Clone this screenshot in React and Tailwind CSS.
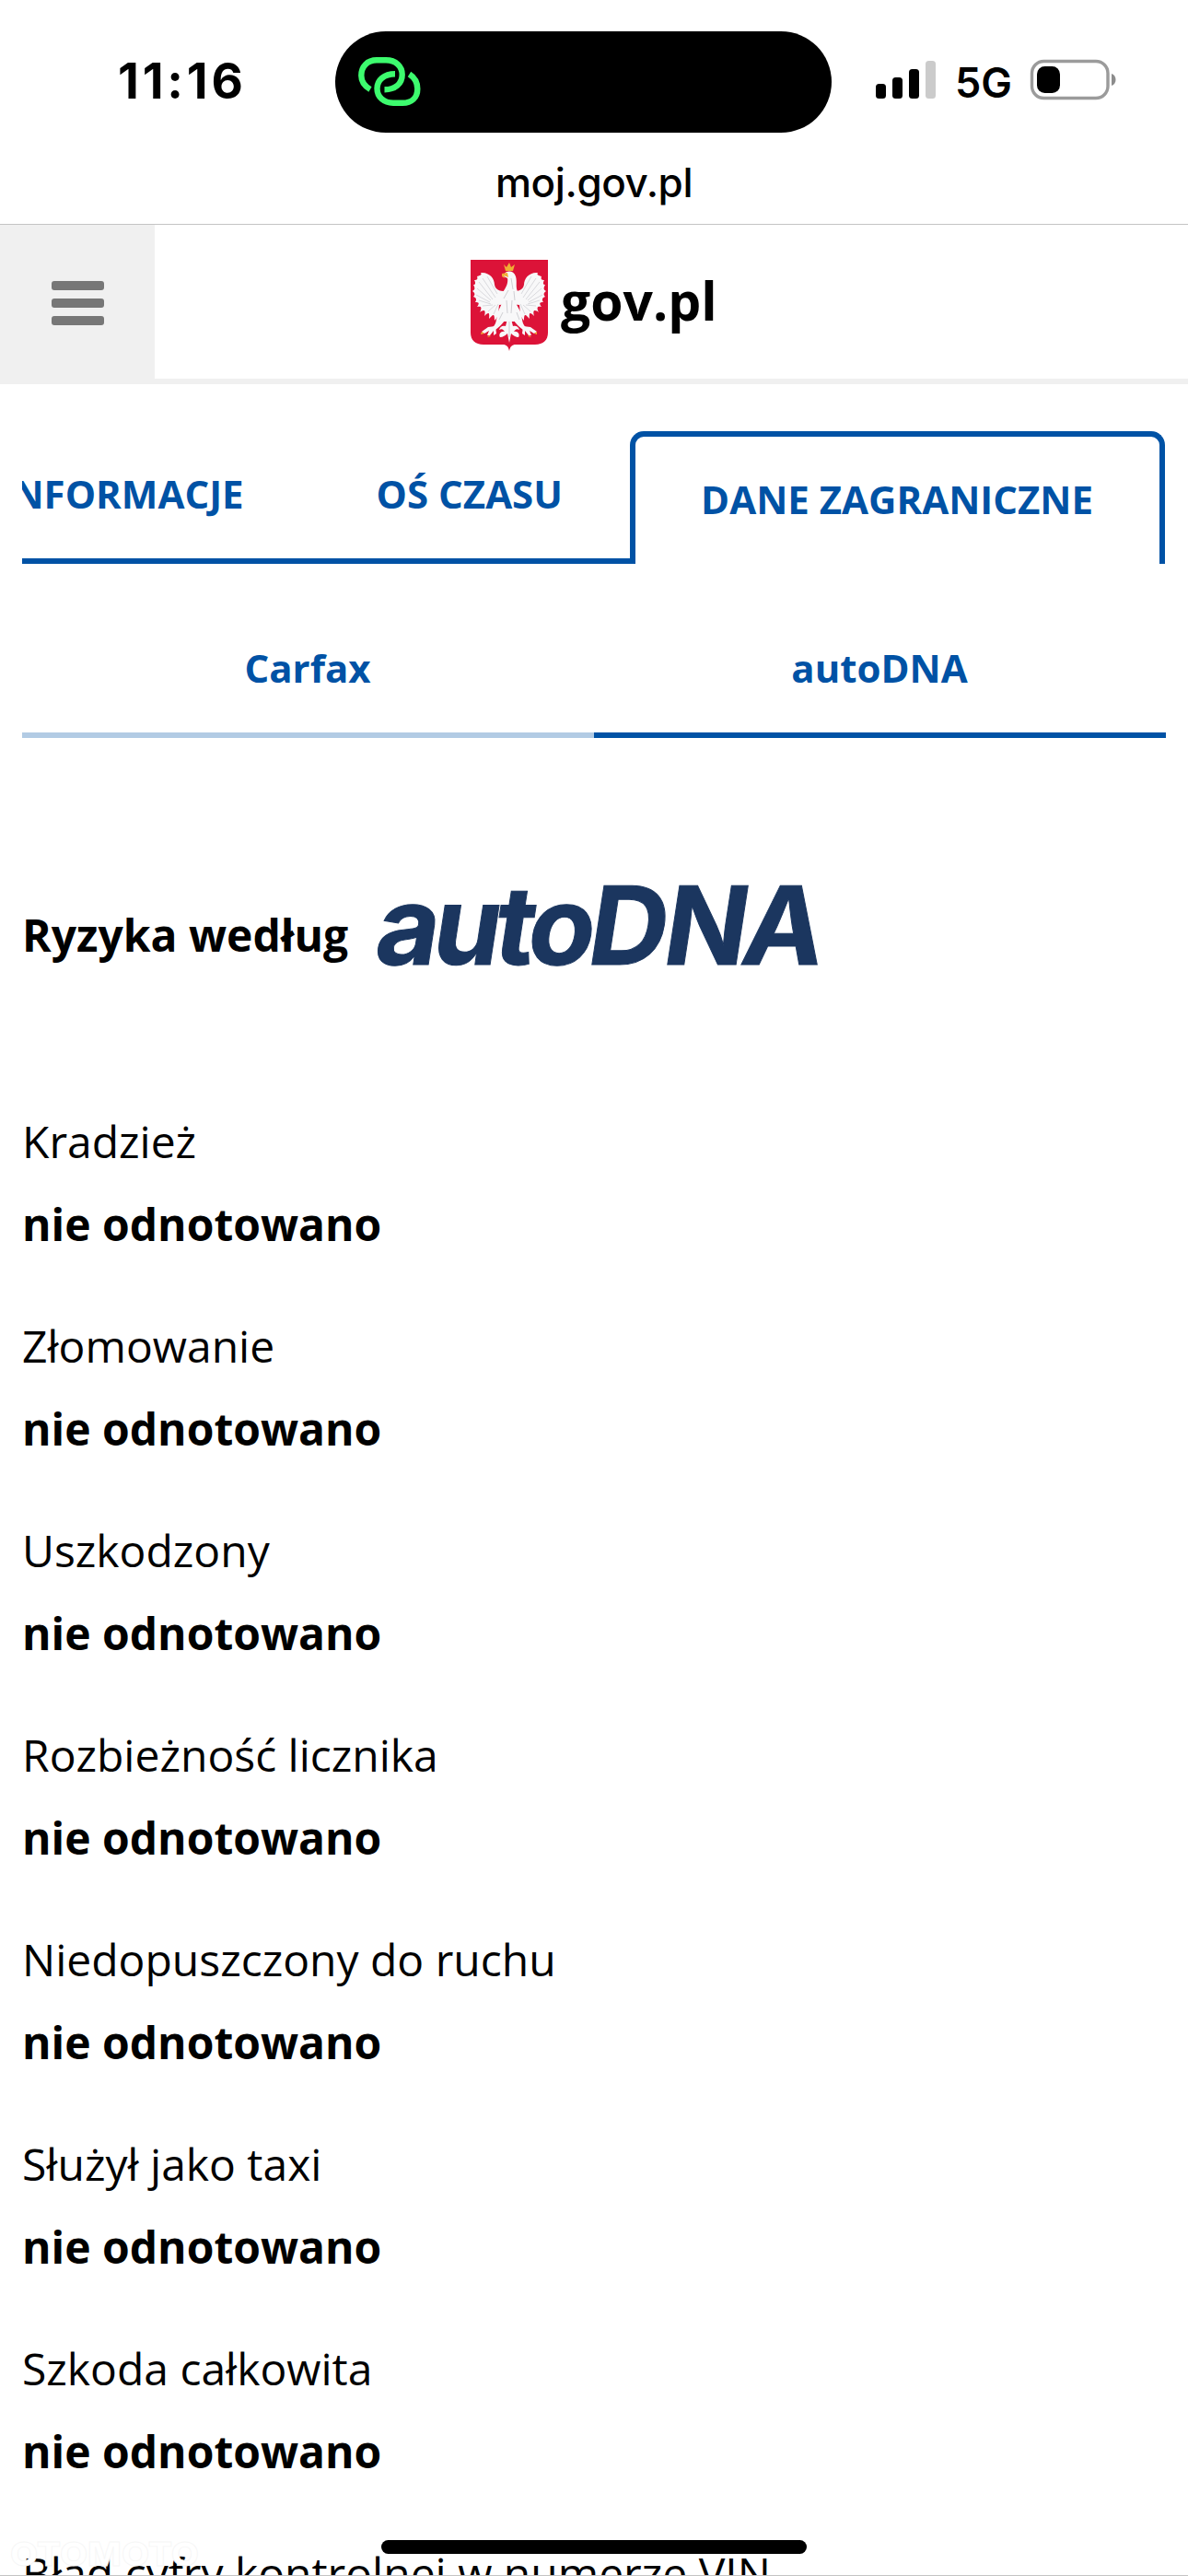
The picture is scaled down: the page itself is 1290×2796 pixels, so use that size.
import React from "react";

const risks = [
  "Kradzież",
  "Złomowanie",
  "Uszkodzony",
  "Rozbieżność licznika",
  "Niedopuszczony do ruchu",
  "Służył jako taxi",
  "Szkoda całkowita",
];

function LinkIcon() {
  return (
    <svg
      viewBox="0 0 68 54"
      className="absolute left-[25px] top-[28px] w-[68px] h-[54px]"
      fill="none"
      stroke="#3dfb6e"
      strokeWidth="6.4"
      aria-hidden="true"
    >
      <path d="M13 35C7 31.500 3.300 26.500 3.300 20C3.300 10 10 3.300 20 3.300H30C41 3.300 47.700 10 47.700 19C47.700 29 40 35.300 28.500 35.300" />
      <path d="M40 18.300C28 18.300 20.500 25 20.500 34C20.500 43.500 28 49.800 38 49.800H48C58 49.800 64.300 44 64.300 34.500C64.300 27 61 22 55.500 18.500" />
    </svg>
  );
}

function StatusBar() {
  return (
    <div className="relative h-[156px] font-['Inter',sans-serif]">
      <div className="absolute left-[128px] top-[56px] text-[53px] leading-[64px] font-bold tracking-[3.8px]">
        11:16
      </div>
      <div className="absolute left-[364px] top-[34px] w-[539px] h-[110px] rounded-full bg-black">
        <LinkIcon />
      </div>
      <svg
        viewBox="0 0 270 60"
        className="absolute left-[945px] top-[60px] w-[270px] h-[60px]"
        aria-hidden="true"
      >
        <rect x="6" y="31" width="11" height="16" rx="3.500" />
        <rect x="24" y="24" width="11" height="23" rx="3.500" />
        <rect x="42" y="15" width="11" height="32" rx="3.500" />
        <rect x="60" y="6" width="11" height="41" rx="3.500" fill="#cbcbcb" />
        <rect x="175.500" y="6.500" width="82.500" height="40" rx="13" fill="none" stroke="#9b9b9b" strokeWidth="3.400" />
        <path d="M262 20C268 22 268 31 262 33Z" fill="#8c8c8c" />
        <rect x="181" y="12" width="25" height="29" rx="8.500" />
      </svg>
      <div className="absolute left-[1037px] top-[63px] text-[45px] leading-[54px] font-semibold">
        5G
      </div>
    </div>
  );
}

function Emblem() {
  const wing = (
    <g>
      <path d="M40 34C34 34 27 34 26 27C26 20 20 13 11 14C13 17 9 17 7 18C8 21 7 22 4 22C6 26 5 27 3 27C5 31 5 32 2 34C5 36 5 38 3 40C6 41 7 43 5 46C9 46 10 47 7 51C11 50 13 51 10 57C14 54 17 54 15 61C19 57 21 56 20 64C24 60 26 57 26 66C31 61 30 56 31 49L40 48Z" />
      <path
        d="M13 20L27 41M9 24L24 43M7 31L22 44M6 38L21 46M9 44L22 48M13 50L24 49M19 56L27 49M25 59L30 48M18 18L29 37"
        stroke="#d0d0d5"
        strokeWidth="0.800"
        fill="none"
      />
    </g>
  );
  return (
    <svg viewBox="0 0 84 99" className="w-[84px] h-[99px] shrink-0" aria-hidden="true">
      <path d="M0 0H84V79C84 87 79 92 70 92H49C45 92 43 94 42 99C41 94 39 92 35 92H14C5 92 0 87 0 79Z" fill="#dc1338" />
      <g fill="#f8f8f9">
        {wing}
        <g transform="translate(84 0) scale(-1 1)">{wing}</g>
        <path d="M37 15C40 11 47 12 49 18C51 25 48 30 52 36C55 40 54 45 50 47L48 67H36L34 47C29 44 30 39 35 35C39 30 41 24 40 20L36 18Z" />
        <path d="M35 45L29 58C28 67 27 71 24 73L27 76C34 71 39 65 41 55ZM48 45L55 58C56 67 57 71 60 73L57 76C50 71 45 65 43 55Z" />
        <path d="M27 72L19 73L12 78L15 80L20 77L18 82L21 82L25 77L25 82L28 80ZM57 72L65 73L72 78L69 80L64 77L66 82L63 82L59 77L59 82L56 80Z" />
        <path d="M40 64H44L46 72C50 71 52 73 53 76C50 74 48 76 47 78C51 77 54 81 52 84C49 84 46 82 44 80L42 90L40 80C38 82 35 84 32 84C30 81 33 77 37 78C36 76 34 74 31 76C32 73 34 71 38 72Z" />
      </g>
      <g stroke="#c9c9ce" strokeWidth="0.900" fill="none">
        <path d="M44 20L46 32M41 33L36 42M47 34L48 44M39 44L40 58M45 44L44 58M35 57L31 65M50 57L53 65M42 67V84" />
      </g>
      <path d="M36 5L39 8L42 3L44 8L48 5L46 12H38ZM34 15L40 14L41 19L36 17L37 20L34 18ZM12 78L11 81L15 80ZM20 82L18 84L22 83ZM72 78L72 81L69 80ZM64 82L66 84L62 83Z" fill="#f0ad35" />
    </svg>
  );
}

function Header() {
  return (
    <header className="flex h-[173px]">
      <button type="button" className="w-[168px] bg-[#f0f0f0] flex flex-col items-center gap-[9px] pt-[61px]">
        <span className="w-[57px] h-[10px] rounded-[3px] bg-[#777]" />
        <span className="w-[57px] h-[10px] rounded-[3px] bg-[#777]" />
        <span className="w-[57px] h-[10px] rounded-[3px] bg-[#777]" />
      </button>
      <div className="flex flex-1 pl-[343px] pt-[38px] border-b-[6px] border-[#f0f0f0]">
        <Emblem />
        <span className="ml-[14px] mt-[5px] text-[57px] leading-[78px] font-bold">gov.pl</span>
      </div>
    </header>
  );
}

function Tabs() {
  return (
    <nav className="text-[#0052a5] font-bold text-[42px]">
      <div className="flex h-[144px] overflow-hidden">
        <div className="w-[660px] flex justify-end overflow-hidden border-b-[6px] border-[#0052a5] leading-[60px] pt-[38px] whitespace-nowrap">
          <span className="mr-[144px]">INFORMACJE</span>
          <span className="mr-[73px]">OŚ CZASU</span>
        </div>
        <div className="w-[581px] border-[#0052a5] border-t-[6px] border-x-[6px] rounded-t-[15px] text-center leading-[60px] pt-[38px]">
          <span className="mr-px">DANE ZAGRANICZNE</span>
        </div>
      </div>
      <div className="flex mt-[42px] h-[147px] text-center leading-[60px]">
        <div className="flex-1 pt-[41px] pr-px border-b-[6px] border-[#b2cbe4]">Carfax</div>
        <div className="flex-1 pt-[41px] pr-px border-b-[6px] border-[#0052a5]">autoDNA</div>
      </div>
    </nav>
  );
}

function AutoDnaLogo() {
  return (
    <svg
      viewBox="0 0 490 140"
      className="ml-[30px] -mt-[10px] w-[490px] h-[140px] overflow-visible"
      aria-label="autoDNA"
    >
      {/* letters are set tightly, one x per letter */}
      <text
        x="-4 58 125 161 227 309 394"
        y="0"
        transform="translate(0 116) skewX(-8.7)"
        fill="#1b365f"
        stroke="#1b365f"
        strokeWidth="1"
        fontFamily="Inter, sans-serif"
        fontWeight="700"
        fontSize="118"
      >
        autoDNA
      </text>
    </svg>
  );
}

export default function App() {
  return (
    <div className="relative w-[1290px] h-[2796px] overflow-hidden bg-white text-black font-['Open_Sans',sans-serif]">
      <StatusBar />
      <div className="h-[88px] border-b border-[#c4c4c4] pt-[17px] text-center font-['Inter',sans-serif] font-medium text-[44px] leading-[50px] tracking-[-0.4px]">
        moj.gov.pl
      </div>
      <Header />
      <main className="px-6 pt-[51px]">
        <Tabs />
        <div className="flex mt-[140px] h-[120px]">
          <h2 className="text-[48px] leading-[72px] font-bold pt-[38px] whitespace-nowrap">Ryzyka według</h2>
          <AutoDnaLogo />
        </div>
        <dl className="mt-[133px] text-[48px]">
          {risks.map((name) => (
            <div key={name} className="h-[222px]">
              <dt className="leading-[90px]">{name}</dt>
              <dd className="leading-[90px] font-bold">nie odnotowano</dd>
            </div>
          ))}
          <dt className="leading-[90px] whitespace-nowrap">Błąd cyfry kontrolnej w numerze VIN</dt>
        </dl>
      </main>

      {/* Watermark, white on white apart from its thin edge */}
      <svg viewBox="0 0 220 40" className="absolute left-0 top-[2754px] w-[220px] h-[40px]" aria-hidden="true">
        <text
          x="11"
          y="31"
          textLength="205"
          lengthAdjust="spacingAndGlyphs"
          fill="#fff"
          stroke="#f6f6f6"
          strokeWidth="0.8"
          fontFamily="Inter, sans-serif"
          fontWeight="800"
          fontSize="35"
        >
          OTOMOTO
        </text>
      </svg>
      <div className="absolute left-0 bottom-0 w-full h-px bg-[#c4c4c4]" />
      <div className="absolute left-[414px] top-[2757px] w-[462px] h-[15px] rounded-full bg-black" />
    </div>
  );
}
